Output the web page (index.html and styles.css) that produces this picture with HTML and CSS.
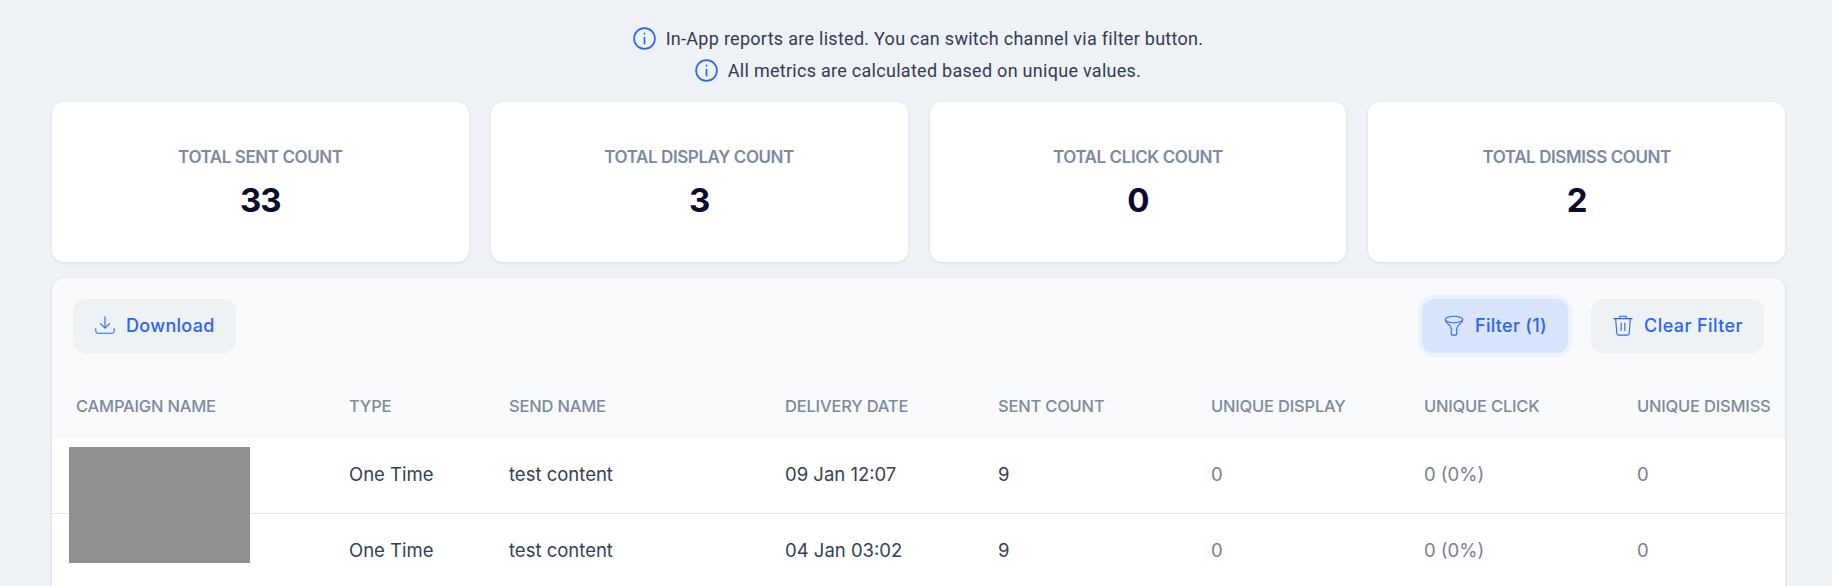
FILE: index.html
```html
<!DOCTYPE html>
<html lang="en">
<head>
    <meta charset="UTF-8">
    <title>In-App Reports</title>
    <link rel="stylesheet" href="styles.css">
</head>
<body>
<main class="page">
    <section class="notes">
        <p class="note">
            <svg class="note-icon" viewBox="0 0 24 24"><circle cx="12" cy="12" r="10"/><path d="M12 11v6"/><path d="M12 7v.5"/></svg>
            In-App reports are listed. You can switch channel via filter button.
        </p>
        <p class="note">
            <svg class="note-icon" viewBox="0 0 24 24"><circle cx="12" cy="12" r="10"/><path d="M12 11v6"/><path d="M12 7v.5"/></svg>
            All metrics are calculated based on unique values.
        </p>
    </section>

    <section class="stats">
        <div class="stat-card"><span class="stat-label">TOTAL SENT COUNT</span><strong class="stat-value">33</strong></div>
        <div class="stat-card"><span class="stat-label">TOTAL DISPLAY COUNT</span><strong class="stat-value">3</strong></div>
        <div class="stat-card"><span class="stat-label">TOTAL CLICK COUNT</span><strong class="stat-value">0</strong></div>
        <div class="stat-card"><span class="stat-label">TOTAL DISMISS COUNT</span><strong class="stat-value">2</strong></div>
    </section>

    <section class="panel">
        <div class="toolbar">
            <button class="btn">
                <svg class="btn-icon" viewBox="0 0 24 24"><path d="M12 3v12"/><path d="M7 10.500l5 5 5-5"/><path d="M2 16v2.500a2.500 2.500 0 0 0 2.500 2.500h15a2.500 2.500 0 0 0 2.500-2.500V16"/></svg>
                Download
            </button>
            <div class="toolbar-right">
                <button class="btn btn-active">
                    <svg class="btn-icon" viewBox="0 0 24 24"><ellipse cx="12" cy="6" rx="9.500" ry="3.500"/><path d="M2.500 6.500c.5 3.500 6 5.500 6.500 9v6a1.500 1.500 0 0 0 1.500 1.500h3a1.500 1.500 0 0 0 1.500-1.500v-6c.5-3.500 6-5.500 6.500-9"/></svg>
                    Filter (1)
                </button>
                <button class="btn btn-clear">
                    <svg class="btn-icon" viewBox="0 0 24 24"><path d="M2 5h20"/><path d="M8.500 5V2.500h7V5"/><path d="M4 5l1.200 16a2 2 0 0 0 2 2h9.600a2 2 0 0 0 2-2L20 5"/><path d="M10 10v8"/><path d="M14 10v8"/></svg>
                    Clear Filter
                </button>
            </div>
        </div>

        <table class="report">
            <thead>
                <tr>
                    <th class="col-name">CAMPAIGN NAME</th>
                    <th class="col-type">TYPE</th>
                    <th class="col-send">SEND NAME</th>
                    <th>DELIVERY DATE</th>
                    <th>SENT COUNT</th>
                    <th>UNIQUE DISPLAY</th>
                    <th>UNIQUE CLICK</th>
                    <th>UNIQUE DISMISS</th>
                </tr>
            </thead>
            <tbody>
                <tr>
                    <td></td>
                    <td>One Time</td>
                    <td>test content</td>
                    <td>09 Jan 12:07</td>
                    <td>9</td>
                    <td class="muted">0</td>
                    <td class="muted">0 (0%)</td>
                    <td class="muted">0</td>
                </tr>
                <tr>
                    <td></td>
                    <td>One Time</td>
                    <td>test content</td>
                    <td>04 Jan 03:02</td>
                    <td>9</td>
                    <td class="muted">0</td>
                    <td class="muted">0 (0%)</td>
                    <td class="muted">0</td>
                </tr>
            </tbody>
        </table>
        <div class="redacted"></div>
    </section>
</main>
</body>
</html>
```

FILE: styles.css
```css
/* General */
html, body {
    height: 100%;
}

body {
    margin: 0;
    overflow: hidden;
    background-color: #eef1f5;
    font-family: Inter, "Liberation Sans", sans-serif;
}

.page {
    padding: 22px 47px 0 52px;
}

/* Notes on top */
.notes {
    height: 80px;
}

.note {
    display: flex;
    justify-content: center;
    align-items: center;
    gap: 9px;
    height: 32px;
    margin: 0;
    padding-right: 2px;
    font-family: Roboto, sans-serif;
    font-size: 18px;
    letter-spacing: 0.28px;
    color: #333b52;
}

.note-icon {
    width: 25px;
    height: 25px;
    fill: none;
    stroke: #2a64f6;
    stroke-width: 1.6;
    stroke-linecap: round;
}

/* Stat cards */
.stats {
    display: grid;
    grid-template-columns: repeat(4, 1fr);
    gap: 22px;
}

.stat-card {
    display: flex;
    flex-direction: column;
    align-items: center;
    height: 160px;
    padding-top: 44px;
    box-sizing: border-box;
    background-color: #fff;
    border-radius: 12px;
    box-shadow: 0 1px 3px rgba(40, 60, 90, 0.12);
}

.stat-label {
    font-size: 17px;
    line-height: 22px;
    font-weight: 600;
    letter-spacing: -0.42px;
    color: #7c8aa0;
}

.stat-value {
    margin-top: 12px;
    font-size: 33px;
    line-height: 40px;
    font-weight: 700;
    letter-spacing: -1px;
    color: #0b0b2e;
}

/* Table panel */
.panel {
    position: relative;
    margin-top: 16px;
    overflow: hidden;
    background-color: #f9fafc;
    border-radius: 12px 12px 0 0;
    box-shadow: 0 1px 3px rgba(40, 60, 90, 0.16);
}

.toolbar {
    display: flex;
    justify-content: space-between;
    padding: 21px;
}

.toolbar-right {
    display: flex;
    gap: 23px;
}

.btn {
    display: flex;
    align-items: center;
    gap: 10px;
    height: 54px;
    padding: 0 21px 2px;
    border: none;
    border-radius: 12px;
    background-color: #eff2f5;
    font-family: inherit;
    font-size: 18px;
    font-weight: 500;
    letter-spacing: 0.3px;
    color: #2a64f6;
}

.btn-active {
    background-color: #d9e4fd;
    box-shadow: 0 0 0 4px #ecf2fe;
}

.btn-clear {
    letter-spacing: 0.42px;
}

.btn-icon {
    width: 22px;
    height: 22px;
    fill: none;
    stroke: #2a64f6;
    stroke-width: 1.2;
    stroke-linecap: round;
    stroke-linejoin: round;
}

.report {
    width: 1774px;
    border-collapse: collapse;
    table-layout: fixed;
}

.report th {
    width: 189px;
    height: 64px;
    padding: 0 0 0 24px;
    text-align: left;
    font-size: 16.500px;
    font-weight: 500;
    letter-spacing: -0.2px;
    color: #7c8aa0;
}

.report .col-name {
    width: 249px;
}

.report .col-type {
    width: 136px;
}

.report .col-send {
    width: 252px;
}

.report td {
    height: 75px;
    padding: 0 0 2px 24px;
    box-sizing: border-box;
    background-color: #fff;
    border-bottom: 1px solid #e2e8ec;
    font-size: 18.500px;
    font-weight: 400;
    color: #344058;
}

.report td.muted {
    color: #76818f;
}

.redacted {
    position: absolute;
    left: 17px;
    top: 169px;
    width: 181px;
    height: 116px;
    background-color: #8f8f8f;
}
```
